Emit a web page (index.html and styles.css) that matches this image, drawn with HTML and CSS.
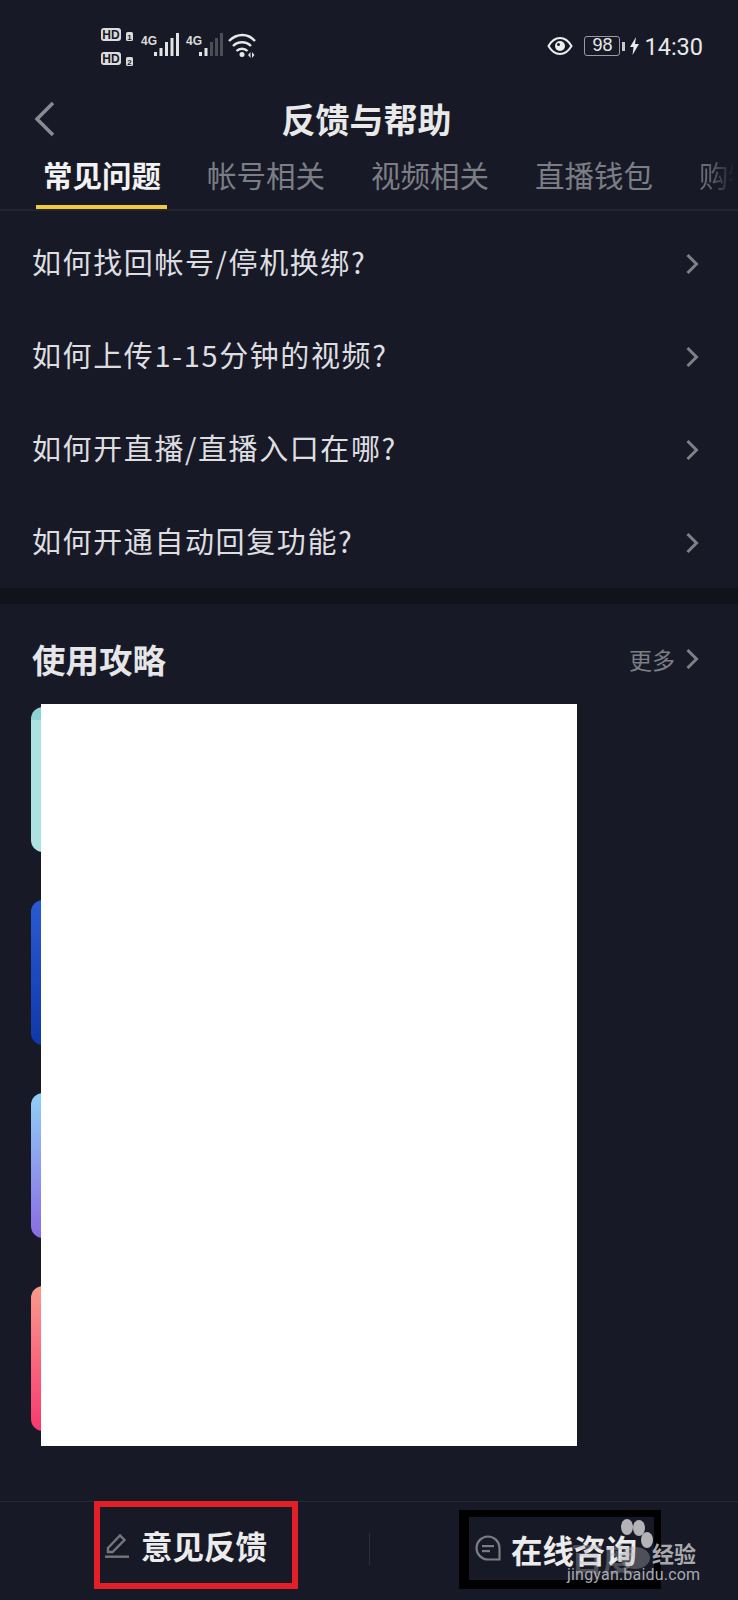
FILE: index.html
```html
<!DOCTYPE html>
<html lang="zh-CN">
<head>
    <meta charset="UTF-8">
    <title>反馈与帮助</title>
    <link rel="stylesheet" href="styles.css">
</head>
<body>
    <div class="page">
        <div class="status-bar">
            <svg class="status-left" width="160" height="50" viewBox="0 0 160 50">
                <rect x="0" y="8" width="20" height="13" rx="3" fill="#dcdcdc"/>
                <text x="10" y="19" class="hd-text" text-anchor="middle">HD</text>
                <rect x="25" y="12" width="7" height="9" rx="1.5" fill="#dcdcdc"/>
                <text x="28.5" y="20" class="sim-text" text-anchor="middle">1</text>
                <rect x="0" y="32" width="20" height="13" rx="3" fill="#dcdcdc"/>
                <text x="10" y="43" class="hd-text" text-anchor="middle">HD</text>
                <rect x="25" y="37" width="7" height="9" rx="1.5" fill="#dcdcdc"/>
                <text x="28.5" y="45" class="sim-text" text-anchor="middle">2</text>

                <text x="40" y="25" class="net-text">4G</text>
                <g fill="#e4e4e4">
                    <rect x="53" y="32" width="3" height="4"/>
                    <rect x="58.5" y="28" width="3" height="8"/>
                    <rect x="64" y="22" width="3" height="14"/>
                    <rect x="69.5" y="18" width="3" height="18"/>
                    <rect x="75" y="13" width="3" height="23"/>
                </g>

                <text x="85" y="25" class="net-text">4G</text>
                <g fill="#e4e4e4">
                    <rect x="98" y="32" width="3" height="4"/>
                    <rect x="103.5" y="28" width="3" height="8"/>
                </g>
                <g fill="#4c4e56">
                    <rect x="109" y="22" width="3" height="14"/>
                    <rect x="114" y="18" width="3" height="18"/>
                    <rect x="119" y="13" width="3" height="23"/>
                </g>

                <g fill="none" stroke="#e8e8e8" stroke-width="2.4">
                    <path d="M128 21c8-8 19-8 26 0"/>
                    <path d="M132 26c5-5 13-5 18 0"/>
                    <path d="M135.500 31c3-3 8-3 11 0"/>
                </g>
                <circle cx="141" cy="34.500" r="2.500" fill="#e8e8e8"/>
                <path d="M147 35l2.500-3v6zM151 32l2.500 3-2.500 3z" fill="#dcdcdc"/>
            </svg>
            <div class="status-right">
                <svg width="26" height="20" viewBox="0 0 26 20">
                    <path d="M1.500 10C5 4 9 2 13 2s8 2 11.500 8C21 16 17 18 13 18S5 16 1.500 10z" fill="none" stroke="#eee" stroke-width="2"/>
                    <circle cx="13" cy="10" r="5" fill="#eee"/>
                    <circle cx="11.500" cy="8.500" r="1.500" fill="#171a26"/>
                </svg>
                <div class="battery">98</div>
                <div class="battery-nub"></div>
                <svg class="bolt" width="9" height="18" viewBox="0 0 9 18">
                    <path d="M6 0L0 10h3.500L2.500 18 9 7H5z" fill="#e8e8e8"/>
                </svg>
                <span class="clock">14:30</span>
            </div>
        </div>

        <div class="nav">
            <svg class="back" width="22" height="36" viewBox="0 0 22 36">
                <path d="M19 2L3 18l16 16" fill="none" stroke="#8a8b90" stroke-width="3.500"/>
            </svg>
            <div class="nav-title">反馈与帮助</div>
        </div>

        <div class="tabs">
            <div class="tab active">常见问题</div>
            <div class="tab">帐号相关</div>
            <div class="tab">视频相关</div>
            <div class="tab">直播钱包</div>
            <div class="tab fade">购物</div>
        </div>

        <div class="faq-list">
            <div class="faq-row">
                <span>如何找回帐号/停机换绑?</span>
                <svg class="chevron" width="14" height="22" viewBox="0 0 14 22"><path d="M2.500 2l9 9-9 9" fill="none" stroke="#7f8086" stroke-width="3"/></svg>
            </div>
            <div class="faq-row">
                <span>如何上传1-15分钟的视频?</span>
                <svg class="chevron" width="14" height="22" viewBox="0 0 14 22"><path d="M2.500 2l9 9-9 9" fill="none" stroke="#7f8086" stroke-width="3"/></svg>
            </div>
            <div class="faq-row">
                <span>如何开直播/直播入口在哪?</span>
                <svg class="chevron" width="14" height="22" viewBox="0 0 14 22"><path d="M2.500 2l9 9-9 9" fill="none" stroke="#7f8086" stroke-width="3"/></svg>
            </div>
            <div class="faq-row">
                <span>如何开通自动回复功能?</span>
                <svg class="chevron" width="14" height="22" viewBox="0 0 14 22"><path d="M2.500 2l9 9-9 9" fill="none" stroke="#7f8086" stroke-width="3"/></svg>
            </div>
        </div>

        <div class="band"></div>

        <div class="guide">
            <div class="guide-head">
                <div class="guide-title">使用攻略</div>
                <div class="guide-more">
                    <span>更多</span>
                    <svg class="chevron-more" width="14" height="22" viewBox="0 0 14 22"><path d="M2.500 2l9 9-9 9" fill="none" stroke="#7f8086" stroke-width="3"/></svg>
                </div>
            </div>
            <div class="guide-cards">
                <div class="card card-teal"></div>
                <div class="card card-blue"></div>
                <div class="card card-violet"></div>
                <div class="card card-pink"></div>
            </div>
            <div class="redaction"></div>
        </div>

        <div class="footer">
            <div class="foot-btn foot-red">
                <svg width="24" height="28" viewBox="0 0 24 28">
                    <path d="M3 17L15 4.500l4.500 4.500L7.500 21H3z" fill="none" stroke="#75767c" stroke-width="2.400"/>
                    <rect x="0" y="24.500" width="24" height="2.400" fill="#75767c"/>
                </svg>
                <span>意见反馈</span>
            </div>
            <div class="foot-divider"></div>
            <div class="foot-btn foot-black">
                <svg width="26" height="27" viewBox="0 0 26 27">
                    <path d="M13 1.500a11.500 11.500 0 0 1 11.500 11.500v11.500H13A11.500 11.500 0 0 1 13 1.500z" fill="none" stroke="#7b7c82" stroke-width="2.200"/>
                    <rect x="7" y="10" width="12" height="2.200" fill="#7b7c82"/>
                    <rect x="7" y="15" width="8" height="2.200" fill="#7b7c82"/>
                </svg>
                <span>在线咨询</span>
            </div>
        </div>

        <div class="watermark">
            <svg class="paw" width="50" height="58" viewBox="0 0 50 58">
                <ellipse cx="10" cy="9" rx="6" ry="8" fill="#b4b4b8"/>
                <ellipse cx="22" cy="10" rx="6" ry="8" fill="#b4b4b8"/>
                <ellipse cx="30" cy="22" rx="6" ry="8" fill="#b4b4b8"/>
                <ellipse cx="18" cy="40" rx="15" ry="11" fill="#b4b4b8" opacity="0.35"/>
            </svg>
            <div class="wm-ghost">百度</div>
            <div class="wm-jy">经验</div>
            <div class="wm-url">jingyan.baidu.com</div>
        </div>
    </div>
</body>
</html>
```

FILE: styles.css
```css
* {
    box-sizing: border-box;
}

body {
    margin: 0;
    background-color: #171a26;
    font-family: "Noto Sans CJK SC", "Noto Sans", sans-serif;
}

.page {
    position: relative;
    width: 738px;
    height: 1600px;
    display: flex;
    flex-direction: column;
    overflow: hidden;
    background-color: #171a26;
}

/* status bar */
.status-bar {
    height: 92px;
    padding: 20px 35px 0 101px;
    display: flex;
    justify-content: space-between;
    align-items: flex-start;
    flex-shrink: 0;
}

.hd-text {
    font: 700 12px "Liberation Sans", sans-serif;
    fill: #171a26;
}

.sim-text {
    font: 700 8px "Liberation Sans", sans-serif;
    fill: #171a26;
}

.net-text {
    font: 700 12px "Liberation Sans", sans-serif;
    fill: #dcdcdc;
}

.status-right {
    display: flex;
    align-items: center;
    height: 52px;
    color: #e8e8e8;
}

.battery {
    width: 36px;
    height: 20px;
    margin-left: 11px;
    border: 1.5px solid #9c9ca0;
    border-radius: 3px;
    font: 18px/17px "Liberation Sans", sans-serif;
    text-align: center;
}

.battery-nub {
    width: 3px;
    height: 9px;
    margin-left: 2px;
    background-color: #c8c8c8;
}

.bolt {
    margin-left: 5px;
}

.clock {
    margin: 2px 0 0 5px;
    font: 23.500px Roboto, sans-serif;
}

/* title row */
.nav {
    height: 53px;
    display: grid;
    grid-template-columns: 1fr auto 1fr;
    align-items: center;
    padding-left: 34px;
    flex-shrink: 0;
}

.nav-title {
    margin-left: -39px;
    font-size: 34px;
    font-weight: 700;
    line-height: 53px;
    color: #e9e9ea;
}

.tabs {
    height: 66px;
    padding-left: 36px;
    display: flex;
    gap: 33px;
    border-bottom: 2px solid #24262f;
    flex-shrink: 0;
    overflow: hidden;
}

.tab {
    height: 64px;
    padding: 0 6px 0 7px;
    flex-shrink: 0;
    font-size: 29.500px;
    line-height: 58px;
    color: #7c7e85;
    border-bottom: 4px solid transparent;
}

.tab.active {
    font-weight: 700;
    color: #f2f2f2;
    border-bottom-color: #f0c93c;
}

.tab.fade {
    -webkit-mask-image: linear-gradient(90deg, #000 20%, transparent 60%);
    mask-image: linear-gradient(90deg, #000 20%, transparent 60%);
    color: #6a6c74;
}

/* question list */
.faq-list {
    padding-top: 5px;
    flex-shrink: 0;
}

.faq-row {
    height: 93px;
    padding: 0 39px 0 32px;
    display: flex;
    justify-content: space-between;
    align-items: center;
    font-size: 29px;
    letter-spacing: 1.6px;
    color: #dedee0;
}

.faq-row span {
    padding-bottom: 4px;
}

.chevron {
    margin-top: 2px;
}

.band {
    height: 16px;
    background-color: #10121c;
    flex-shrink: 0;
}

/* guide section */
.guide {
    position: relative;
    flex: 1;
    min-height: 0;
}

.guide-head {
    height: 103px;
    padding: 6px 39px 0 32px;
    display: flex;
    justify-content: space-between;
    align-items: center;
}

.guide-title {
    font-size: 33.500px;
    font-weight: 700;
    color: #e6e6e8;
}

.guide-more {
    display: flex;
    align-items: center;
    gap: 10px;
    font-size: 23px;
    color: #7c7e85;
}

.guide-cards {
    padding-left: 31px;
    display: flex;
    flex-direction: column;
    gap: 48px;
}

.card {
    width: 100px;
    height: 145px;
    border-radius: 12px;
}

.card-teal {
    background: linear-gradient(#8fd2d4 0, #8fd2d4 13px, #ade2e3 13px);
}

.card-blue {
    background: linear-gradient(#2a5bd3, #1037ab);
}

.card-violet {
    background: linear-gradient(#90d0f6, #8a6be6);
}

.card-pink {
    background: linear-gradient(#fb9a8c, #f9386f);
}

.redaction {
    position: absolute;
    left: 41px;
    top: 100px;
    width: 536px;
    height: 742px;
    background-color: #fff;
}

/* bottom bar */
.footer {
    height: 99px;
    padding: 0 0 11px 94px;
    display: flex;
    align-items: flex-end;
    border-top: 1px solid #262832;
    flex-shrink: 0;
}

.foot-btn {
    display: flex;
    align-items: center;
    font-size: 31.500px;
    font-weight: 700;
    color: #ececec;
}

.foot-red {
    width: 204px;
    height: 88px;
    padding-left: 5px;
    gap: 12px;
    border: 6px solid #e21f26;
}

.foot-divider {
    width: 1px;
    height: 32px;
    margin: 0 89px 24px 71px;
    background-color: #2c2e38;
}

.foot-black {
    width: 202px;
    height: 79px;
    padding-left: 6px;
    gap: 10px;
    border-style: solid;
    border-color: #000;
    border-width: 7px 7px 9px 10px;
}

/* baidu mark, sits over the bottom bar */
.watermark {
    position: absolute;
    left: 565px;
    top: 1515px;
    width: 140px;
    height: 80px;
}

.paw {
    position: absolute;
    left: 52px;
    top: 3px;
}

.wm-ghost {
    position: absolute;
    left: 6px;
    top: 20px;
    font-size: 32px;
    font-weight: 700;
    line-height: 44px;
    color: rgba(180, 180, 184, 0.35);
}

.wm-jy {
    position: absolute;
    left: 87px;
    top: 22px;
    font-size: 22px;
    font-weight: 700;
    line-height: 30px;
    color: #a9a9ad;
}

.wm-url {
    position: absolute;
    left: 2px;
    top: 47px;
    font: 16px/26px Roboto, sans-serif;
    letter-spacing: 0.2px;
    color: #a9a9ad;
    white-space: nowrap;
}
```
